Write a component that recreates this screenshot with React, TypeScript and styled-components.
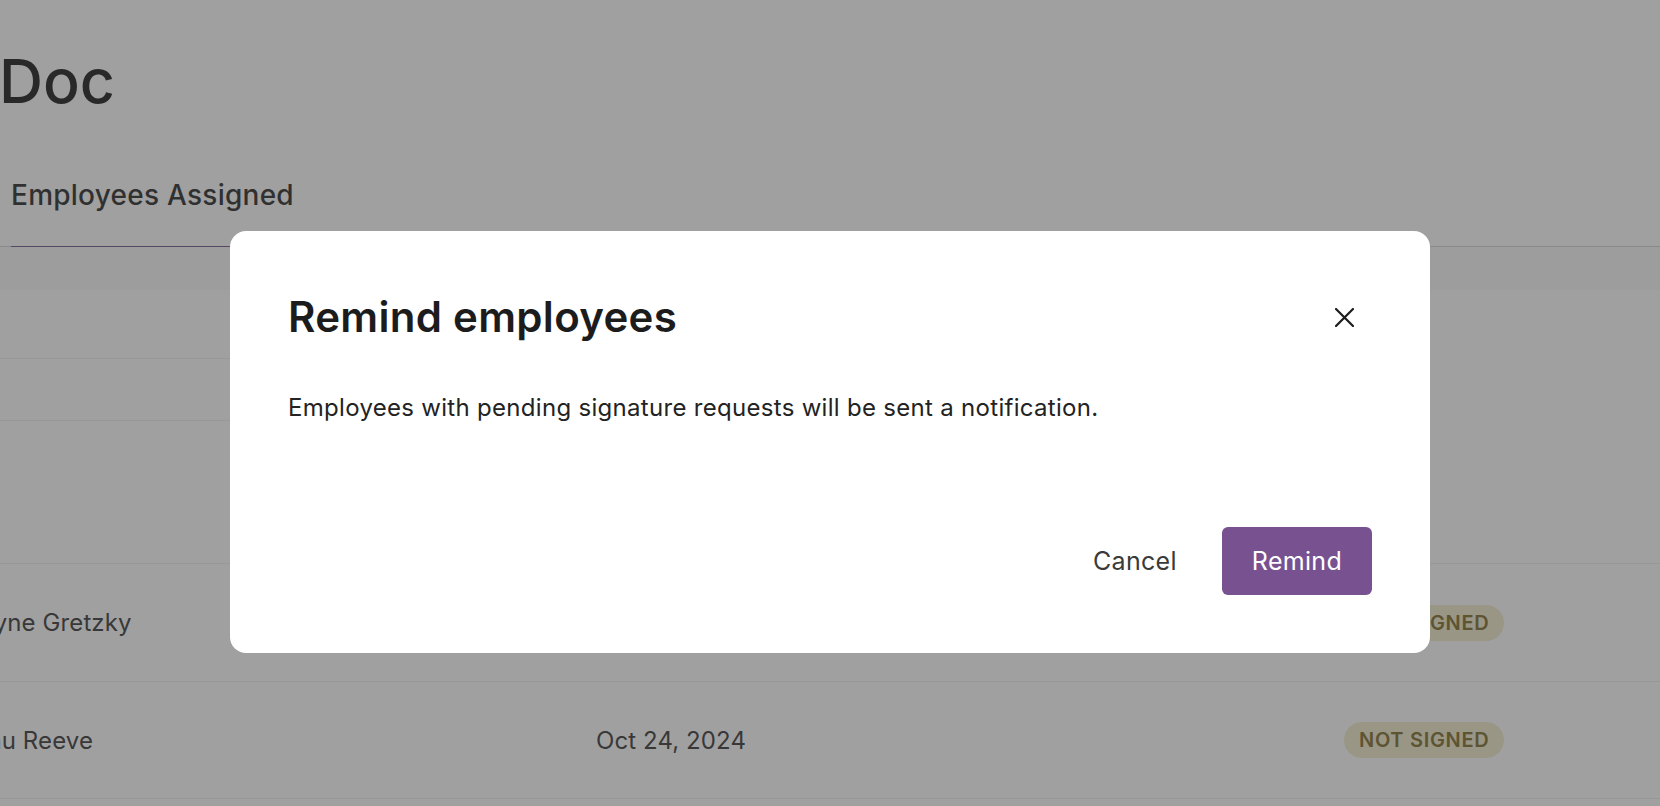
import React from "react";
import styled, { createGlobalStyle } from "styled-components";

const GlobalStyle = createGlobalStyle`
  html, body {
    margin: 0;
    padding: 0;
    width: 100%;
    height: 100%;
    overflow: hidden;
    background: #ffffff;
  }
  body {
    font-family: Inter, "Noto Sans", "Liberation Sans", sans-serif;
    color: #222222;
  }
  * { box-sizing: border-box; }
`;

const Page = styled.div`
  width: 1660px;
  height: 806px;
  overflow: hidden;
  background: #ffffff;
`;

const PageTitle = styled.h1`
  margin: 0 0 0 -1px;
  padding-top: 45px;
  font-size: 61px;
  line-height: 72px;
  font-weight: 500;
  color: #111111;
  letter-spacing: 0;
`;

const TabBar = styled.div`
  margin-top: 61px;
  display: flex;
  padding-left: 11px;
  border-bottom: 1px solid #d0d0d0;
`;

const Tab = styled.div<{ $active?: boolean }>`
  font-size: 28px;
  line-height: 34px;
  font-weight: 500;
  letter-spacing: 0.25px;
  color: #1e1e1e;
  padding-bottom: 34px;
  margin-bottom: -1px;
  border-bottom: 1px solid ${(p) => (p.$active ? "#6e4a88" : "transparent")};
`;

const Table = styled.div`
  margin-left: -42px;
  display: flex;
  flex-direction: column;
`;

const HeaderRow = styled.div`
  display: grid;
  grid-template-columns: 638px 748px 1fr;
  align-items: center;
  height: 43px;
  background: #f8f8f8;
  font-size: 16px;
  font-weight: 500;
  color: #555555;
`;

const Row = styled.div<{ $h: number; $short?: boolean }>`
  display: grid;
  grid-template-columns: 638px 748px 1fr;
  align-items: center;
  height: ${(p) => p.$h}px;
  width: ${(p) => (p.$short ? "900px" : "auto")};
  border-bottom: 1px solid #efefef;
  font-size: 24px;
  letter-spacing: 0.1px;
  color: #2e2e2e;
`;

const Cell = styled.div`
  white-space: nowrap;
`;

const Badge = styled.span`
  display: inline-flex;
  align-items: center;
  height: 36px;
  padding: 0 15px;
  border-radius: 18px;
  background: #f2eaca;
  color: #786622;
  font-size: 20px;
  font-weight: 600;
  letter-spacing: 0.7px;
`;

const Overlay = styled.div`
  position: fixed;
  inset: 0;
  background: rgba(66, 66, 66, 0.5);
  display: flex;
  justify-content: center;
  align-items: flex-start;
  padding-top: 231px;
`;

const Modal = styled.div`
  width: 1200px;
  background: #ffffff;
  border-radius: 16px;
  padding: 58px;
  display: flex;
  flex-direction: column;
`;

const ModalHeader = styled.div`
  display: flex;
  align-items: center;
  justify-content: space-between;
  height: 56px;
`;

const ModalTitle = styled.h2`
  margin: 0;
  font-size: 42px;
  line-height: 50px;
  font-weight: 600;
  color: #1c1c1c;
  letter-spacing: 0.3px;
`;

const CloseButton = styled.button`
  width: 56px;
  height: 56px;
  border: none;
  background: transparent;
  padding: 0;
  display: grid;
  place-items: center;
  cursor: pointer;
  color: #1c1c1c;
`;

const ModalBody = styled.p`
  margin: 46px 0 0;
  font-size: 24px;
  line-height: 34px;
  letter-spacing: 0.3px;
  color: #232323;
`;

const ModalFooter = styled.div`
  margin-top: 102px;
  display: flex;
  justify-content: flex-end;
  gap: 15px;
`;

const Button = styled.button<{ $primary?: boolean }>`
  height: 68px;
  padding: 0 30px;
  border: none;
  border-radius: 6px;
  font-family: inherit;
  font-size: 25px;
  font-weight: 400;
  letter-spacing: 0.3px;
  cursor: pointer;
  background: ${(p) => (p.$primary ? "#785190" : "transparent")};
  color: ${(p) => (p.$primary ? "#ffffff" : "#3a3a3a")};
`;

const CloseIcon = () => (
  <svg width="19" height="19" viewBox="0 0 19 19" fill="none">
    <path d="M1 1L18 18M18 1L1 18" stroke="currentColor" strokeWidth="2.2" strokeLinecap="round" />
  </svg>
);

export default function App() {
  return (
    <>
      <GlobalStyle />
      <Page>
        <PageTitle>Doc</PageTitle>
        <TabBar>
          <Tab $active>Employees Assigned</Tab>
        </TabBar>
        <Table>
          <HeaderRow>
            <Cell />
            <Cell>Date signed</Cell>
            <Cell />
          </HeaderRow>
          <Row $h={69} $short />
          <Row $h={62} $short />
          <Row $h={143} />
          <Row $h={118}>
            <Cell>Wayne Gretzky</Cell>
            <Cell>Oct 24, 2024</Cell>
            <Cell>
              <Badge>NOT SIGNED</Badge>
            </Cell>
          </Row>
          <Row $h={117}>
            <Cell>Beau Reeve</Cell>
            <Cell>Oct 24, 2024</Cell>
            <Cell>
              <Badge>NOT SIGNED</Badge>
            </Cell>
          </Row>
        </Table>
      </Page>
      <Overlay>
        <Modal role="dialog" aria-modal="true">
          <ModalHeader>
            <ModalTitle>Remind employees</ModalTitle>
            <CloseButton aria-label="Close">
              <CloseIcon />
            </CloseButton>
          </ModalHeader>
          <ModalBody>Employees with pending signature requests will be sent a notification.</ModalBody>
          <ModalFooter>
            <Button>Cancel</Button>
            <Button $primary>Remind</Button>
          </ModalFooter>
        </Modal>
      </Overlay>
    </>
  );
}
